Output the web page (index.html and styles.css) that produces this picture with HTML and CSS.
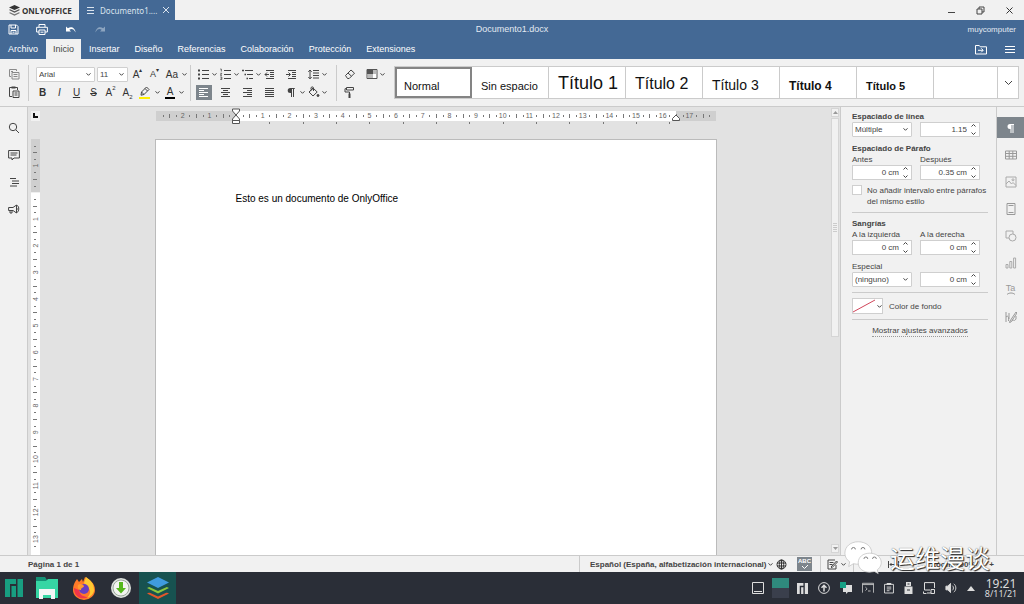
FILE: index.html
```
<!DOCTYPE html>
<html lang="es">
<head>
    <meta charset="UTF-8">
    <meta name="viewport" content="width=device-width, initial-scale=1.0">
    <title>Documento1.docx</title>
    <link rel="stylesheet" href="styles.css">
</head>
<body>

<div class="titlebar">
    <div class="brand">
        <svg width="11" height="11" viewBox="0 0 11 11"><path fill="#333" d="M5.500 0 11 2.500 5.500 5 0 2.500z"/><path fill="#555" d="M1 4.300 5.500 6.300 10 4.300 11 5 5.500 7.700 0 5z"/><path fill="#777" d="M1 7.200 5.500 9.200 10 7.200 11 7.900 5.500 10.700 0 7.900z"/></svg>
        <span>ONLYOFFICE</span>
    </div>
    <div class="doc-tab">
        <svg width="7" height="7" viewBox="0 0 7 7" stroke="#dbe4ee"><path d="M0 .5h7M0 3.500h7M0 6.500h7"/></svg>
        <span class="doc-name">Documento1....</span>
        <button class="icon-btn" aria-label="Cerrar pestaña"><svg width="6" height="6" viewBox="0 0 6 6" stroke="#dbe4ee"><path d="m0 0 6 6M6 0 0 6"/></svg></button>
    </div>
    <div class="window-buttons">
        <button class="icon-btn" aria-label="Minimizar"><svg width="9" height="9" viewBox="0 0 9 9" stroke="#444"><path d="M1 6.500h7"/></svg></button>
        <button class="icon-btn" aria-label="Restaurar"><svg width="9" height="9" viewBox="0 0 9 9" fill="none" stroke="#444"><path d="M1 3h5v5H1zM3 3V1h5v5H6"/></svg></button>
        <button class="icon-btn" aria-label="Cerrar"><svg width="9" height="9" viewBox="0 0 9 9" stroke="#333"><path d="m1.500 1.500 6 6M7.500 1.500l-6 6"/></svg></button>
    </div>
</div>

<header>
    <div class="quick-row">
        <div class="quick-buttons">
            <button class="icon-btn" aria-label="Guardar"><svg width="11" height="11" viewBox="0 0 11 11" fill="none" stroke="#fff"><path d="M1 1h7.500L10 2.500V10H1zM3 1v3h4.500V1M3 10V6.500h5V10M4.500 8.200h2"/></svg></button>
            <button class="icon-btn" aria-label="Imprimir"><svg width="12" height="11" viewBox="0 0 12 11" fill="none" stroke="#fff"><path d="M3 3V.5h6V3M3 8H.6V3.300h10.800V8H9M3 6h6v4.500H3zM4.500 8.200h3"/></svg></button>
            <button class="icon-btn" aria-label="Deshacer"><svg width="12" height="10" viewBox="0 0 12 10"><path fill="#fff" d="M1 1.500v5h5L4.300 4.800C6.500 3.300 9 4 10.500 7.500 10.300 2.800 6 .8 2.900 3.300z"/></svg></button>
            <button class="icon-btn" aria-label="Rehacer"><svg width="12" height="10" viewBox="0 0 12 10"><path fill="#8da5c0" d="M11 1.500v5H6l1.700-1.700C5.500 3.300 3 4 1.500 7.500 1.700 2.800 6 .8 9.100 3.300z"/></svg></button>
        </div>
        <h1>Documento1.docx</h1>
        <span class="user">muycomputer</span>
    </div>
    <nav>
        <a href="#">Archivo</a>
        <a href="#" class="active">Inicio</a>
        <a href="#">Insertar</a>
        <a href="#">Diseño</a>
        <a href="#">Referencias</a>
        <a href="#">Colaboración</a>
        <a href="#">Protección</a>
        <a href="#">Extensiones</a>
        <div class="nav-right">
            <button class="icon-btn" aria-label="Abrir ubicación"><svg width="12" height="11" viewBox="0 0 12 11" fill="none" stroke="#fff"><path d="M.5 10V1.500h3.800l1 1.300h6.200V10zM3 6.300h5M6.200 4.300l2 2-2 2"/></svg></button>
            <button class="icon-btn" aria-label="Opciones"><svg width="10" height="9" viewBox="0 0 10 9" stroke="#fff"><path d="M0 1.500h10M0 4.500h10M0 7.500h10"/></svg></button>
        </div>
    </nav>
</header>

<div class="toolbar">
    <div class="group clipboard">
        <div class="row"><button class="tool" aria-label="Copiar"><svg width="12" height="12" viewBox="0 0 12 12" fill="none" stroke="#8a8a8a"><path d="M3 8.500H1.500v-7h7V3M3 3.500h2M4 4.500h7v6.500H4zM5.500 6.500h4M5.500 8.500h4"/></svg></button></div>
        <div class="row"><button class="tool" aria-label="Pegar"><svg width="12" height="12" viewBox="0 0 12 12" fill="none" stroke="#444"><path d="M4 10.500H1.500v-9h8V4"/><path stroke-width="2" d="M3.500 1.500h4"/><path d="M5 5h6v6.500H5zM6.500 7h3M6.500 9h3"/></svg></button></div>
    </div>
    <div class="group font">
        <div class="row">
            <select class="font-name" aria-label="Fuente"><option>Arial</option></select>
            <select class="font-size" aria-label="Tamaño de letra"><option>11</option></select>
            <button class="tool">A<sup>▴</sup></button>
            <button class="tool small">A<sup>▾</sup></button>
            <button class="tool split">Aa<i class="caret"></i></button>
        </div>
        <div class="row">
            <button class="tool"><b>B</b></button>
            <button class="tool italic">I</button>
            <button class="tool underline">U</button>
            <button class="tool strike">S</button>
            <button class="tool">A<sup>2</sup></button>
            <button class="tool">A<sub>2</sub></button>
            <button class="tool split" aria-label="Color de resaltado"><svg width="12" height="13" viewBox="0 0 12 13" fill="none" stroke="#444"><path stroke="#ffee00" stroke-width="2" d="M0 12h11"/><path d="M2.500 6 7.500 1l2.500 2.500-5 5-3 .7zM2.500 6 5 8.500M6 2.500 8.500 5"/></svg><i class="caret"></i></button>
            <button class="tool split"><span class="font-color">A</span><i class="caret"></i></button>
        </div>
    </div>
    <div class="group para">
        <div class="row">
            <button class="tool" aria-label="Viñetas"><svg width="12" height="12" viewBox="0 0 12 12" stroke="#444"><path d="M4 2.500h7M4 6.500h7M4 10.500h7"/><path stroke-width="2" d="M0 2.500h2M0 6.500h2M0 10.500h2"/></svg><i class="caret"></i></button>
            <button class="tool" aria-label="Numeración"><svg width="12" height="12" viewBox="0 0 12 12" fill="none" stroke="#444"><path d="M4 2.500h7M4 6.500h7M4 10.500h7"/><path stroke-width=".8" d="M.3 1h1v2.500M.3 5.300h1.500l-1.500 2h1.700M.3 9h1.500v2.500H.3M.6 10.200h1"/></svg><i class="caret"></i></button>
            <button class="tool" aria-label="Lista multinivel"><svg width="12" height="12" viewBox="0 0 12 12" stroke="#444"><path d="M3 2.500h8M5 6.500h6M7 10.500h4"/><path stroke-width="1.500" d="M0 2.500h2M2.500 6.500H4M4.500 10.500H6"/></svg><i class="caret"></i></button>
            <button class="tool" aria-label="Reducir sangría"><svg width="12" height="12" viewBox="0 0 12 12" fill="none" stroke="#444"><path d="M2 2.500h8M6 4.500h4M6 6.500h4M6 8.500h4M2 10.500h8M5 6.500H1M3 4.500l-2 2 2 2"/></svg></button>
            <button class="tool" aria-label="Aumentar sangría"><svg width="12" height="12" viewBox="0 0 12 12" fill="none" stroke="#444"><path d="M2 2.500h8M6 4.500h4M6 6.500h4M6 8.500h4M2 10.500h8M0 6.500h4M2.500 4.500l2 2-2 2"/></svg></button>
            <button class="tool" aria-label="Interlineado"><svg width="12" height="12" viewBox="0 0 12 12" fill="none" stroke="#444"><path d="M5 2.500h6M5 5h6M5 7.500h6M5 10h6M2 2v9M.3 3.800 2 2l1.700 1.800M.3 9 2 10.800 3.700 9"/></svg><i class="caret"></i></button>
        </div>
        <div class="row">
            <button class="tool on" aria-label="Alinear a la izquierda"><svg width="12" height="12" viewBox="0 0 12 12" stroke="#fff"><path d="M1 2.500h9M1 4.500h5M1 6.500h9M1 8.500h5M1 10.500h9"/></svg></button>
            <button class="tool" aria-label="Centrar"><svg width="12" height="12" viewBox="0 0 12 12" stroke="#444"><path d="M1 2.500h9M3 4.500h5M1 6.500h9M3 8.500h5M1 10.500h9"/></svg></button>
            <button class="tool" aria-label="Alinear a la derecha"><svg width="12" height="12" viewBox="0 0 12 12" stroke="#444"><path d="M1 2.500h9M5 4.500h5M1 6.500h9M5 8.500h5M1 10.500h9"/></svg></button>
            <button class="tool" aria-label="Justificar"><svg width="12" height="12" viewBox="0 0 12 12" stroke="#444"><path d="M1 2.500h9M1 4.500h9M1 6.500h9M1 8.500h9M1 10.500h9"/></svg></button>
            <button class="tool" aria-label="Caracteres no imprimibles"><svg width="12" height="12" viewBox="0 0 12 12"><path fill="#444" d="M8.500 2H4.200a2.500 2.500 0 0 0 0 5H5v4h1V3h1v8h1V3h1z"/></svg><i class="caret"></i></button>
            <button class="tool" aria-label="Color de sombreado"><svg width="12" height="12" viewBox="0 0 12 12" fill="none" stroke="#444"><path d="M5 2 1 6l4 4 4.200-4zM2 5.500 5 2.500M3 3.500V2c0-1.500 2.500-1.500 2.500 0v3"/><circle cx="10" cy="9.500" r="1" fill="#444"/></svg><i class="caret"></i></button>
        </div>
    </div>
    <div class="group misc">
        <div class="row">
            <button class="tool" aria-label="Borrar estilo"><svg width="12" height="12" viewBox="0 0 12 12" fill="none" stroke="#444"><path d="M1.500 7.500 7 2l3.500 3.200-5.300 5.300H3.500zM4 5l3.500 3.200"/></svg></button>
            <button class="tool" aria-label="Combinación de colores"><svg width="12" height="12" viewBox="0 0 12 12"><path fill="#fff" stroke="#555" d="M1 1.500h10v9H1z"/><path fill="#555" d="M1 1h6v5H1z"/><path fill="#bbb" d="M7 2h3v4H7zM2 6h5v4H2z"/></svg><i class="caret"></i></button>
        </div>
        <div class="row"><button class="tool" aria-label="Copiar estilo"><svg width="12" height="12" viewBox="0 0 12 12" fill="none" stroke="#444"><path d="M2.500 1.500h7v2.500h-7zM2.500 2.700H1V6h4.500v2"/><path stroke-width="2" d="M5.500 7.500V12"/></svg></button></div>
    </div>
    <div class="styles">
        <button class="style selected">Normal</button>
        <button class="style">Sin espacio</button>
        <button class="style t1">Título 1</button>
        <button class="style t2">Título 2</button>
        <button class="style t3">Título 3</button>
        <button class="style t4">Título 4</button>
        <button class="style t5">Título 5</button>
        <div class="style-empty"></div>
        <button class="style-more" aria-label="Más estilos"><svg width="9" height="6" viewBox="0 0 9 6" fill="none" stroke="#444"><path d="m1 1 3.500 3.500L8 1"/></svg></button>
    </div>
</div>

<main>
    <div class="left-bar">
        <button class="side" aria-label="Buscar"><svg width="12" height="12" viewBox="0 0 12 12" fill="none" stroke="#444"><circle cx="5" cy="5" r="3.700"/><path d="m8 8 3 3"/></svg></button>
        <button class="side" aria-label="Comentarios"><svg width="12" height="12" viewBox="0 0 12 12" fill="none" stroke="#444"><path d="M.6 1.500h10.800V9H6l-2 2V9H.6zM2.500 4h7M2.500 6h6"/></svg></button>
        <button class="side" aria-label="Navegación"><svg width="12" height="12" viewBox="0 0 12 12" stroke="#444"><path d="M2 2.500h6M4 5h7M4 7.500h7M2 10h7"/></svg></button>
        <button class="side" aria-label="Sugerencias"><svg width="12" height="12" viewBox="0 0 12 12" fill="none" stroke="#444"><path d="M.6 4.500H5L8.500 2v8L5 7.500H.6zM2 7.500V10h2V7.500M8.500 2.500c3-.5 3 7 0 7M8 4.500c1.500 0 1.500 3 0 3"/></svg></button>
    </div>

    <div class="editor">
        <div class="corner"><svg width="9" height="10" viewBox="0 0 9 10"><path stroke="#111" stroke-width="2" fill="none" d="M3 2v4h4"/></svg></div>
        <div class="ruler-row"><svg id="ruler-h" width="560" height="16"></svg></div>
        <svg id="ruler-v" width="9"></svg>
        <div class="canvas">
            <div class="page"><p>Esto es un documento de OnlyOffice</p></div>
        </div>
        <div class="scrollbar">
            <button class="scroll-btn" aria-label="Subir"><svg width="5" height="3" viewBox="0 0 5 3"><path fill="#999" d="M0 3 2.500 0 5 3z"/></svg></button>
            <div class="thumb"><svg width="4" height="9" viewBox="0 0 4 9" stroke="#ccc"><path d="M0 .5h4M0 2.500h4M0 4.500h4M0 6.500h4M0 8.500h4"/></svg></div>
            <button class="scroll-btn" aria-label="Bajar"><svg width="5" height="3" viewBox="0 0 5 3"><path fill="#999" d="m0 0 2.500 3L5 0z"/></svg></button>
        </div>
    </div>

    <form class="panel">
        <h2>Espaciado de línea</h2>
        <div class="fields">
            <select aria-label="Espaciado de línea"><option>Múltiple</option></select>
            <div class="spin"><input type="text" value="1.15" aria-label="Valor de espaciado"></div>
        </div>
        <h2 class="gap">Espaciado de Párafo</h2>
        <div class="fields">
            <label for="before">Antes</label>
            <label for="after">Después</label>
            <div class="spin"><input type="text" id="before" value="0 cm"></div>
            <div class="spin"><input type="text" id="after" value="0.35 cm"></div>
        </div>
        <div class="check">
            <input type="checkbox" id="same-style">
            <label for="same-style">No añadir intervalo entre párrafos del mismo estilo</label>
        </div>
        <hr>
        <h2>Sangrías</h2>
        <div class="fields">
            <label for="left">A la izquierda</label>
            <label for="right">A la derecha</label>
            <div class="spin"><input type="text" id="left" value="0 cm"></div>
            <div class="spin"><input type="text" id="right" value="0 cm"></div>
        </div>
        <label class="gap" for="special">Especial</label>
        <div class="fields">
            <select id="special"><option>(ninguno)</option></select>
            <div class="spin"><input type="text" value="0 cm" aria-label="Valor especial"></div>
        </div>
        <hr>
        <div class="color-row">
            <button type="button" class="swatch" id="bg-color"><svg width="22" height="14" viewBox="0 0 22 14"><path stroke="#d0455a" d="M0 13 22 1"/></svg><i class="caret"></i></button>
            <label for="bg-color">Color de fondo</label>
        </div>
        <hr>
        <a class="advanced" href="#">Mostrar ajustes avanzados</a>
    </form>

    <div class="right-bar">
        <button class="side on" aria-label="Párrafo"><svg width="12" height="12" viewBox="0 0 12 12"><path fill="#fff" d="M9 2H5a2.500 2.500 0 0 0 0 5h.5v4h1V3h1v8h1V3H9z"/></svg></button>
        <button class="side" aria-label="Tabla"><svg width="12" height="12" viewBox="0 0 12 12" fill="none" stroke="#999"><path d="M.5 2h11v8H.5zM.5 4.500h11M.5 7.300h11M4.200 2v8M7.800 2v8"/></svg></button>
        <button class="side" aria-label="Imagen"><svg width="12" height="12" viewBox="0 0 12 12" fill="none" stroke="#aaa"><path d="M1 1h10v10H1zM1 8l3-3 2.500 3L8 6.500l3 3"/><circle cx="8" cy="3.800" r="1"/></svg></button>
        <button class="side" aria-label="Encabezado"><svg width="12" height="12" viewBox="0 0 12 12" fill="none" stroke="#999"><path d="M2 .5h8v11H2zM3.500 2.500h5M3.500 9.500h5"/></svg></button>
        <button class="side" aria-label="Forma"><svg width="12" height="12" viewBox="0 0 12 12" fill="none" stroke="#aaa"><path d="M4 8H1V1h7v3"/><circle cx="7.500" cy="7.500" r="3.500"/></svg></button>
        <button class="side" aria-label="Gráfico"><svg width="12" height="12" viewBox="0 0 12 12" fill="none" stroke="#aaa"><path d="M1 7.500h2V11H1zM4.800 4.500h2V11h-2zM8.600 1h2v10h-2z"/></svg></button>
        <button class="side text-art">Ta<svg width="10" height="3" viewBox="0 0 10 3" fill="none" stroke="#999"><path d="M1 2.500c2-2 6-2 8 0"/></svg></button>
        <button class="side" aria-label="Firma"><svg width="12" height="12" viewBox="0 0 12 12" fill="none" stroke="#999"><path d="M1 1v10M1 6c2-2 3 0 2.500 4M5 10 11 1l1 1-6 9-1.500.500zM4 2v6M7 10c2-2 2 1 4-2V5"/></svg></button>
    </div>
</main>

<div class="statusbar">
    <span>Página 1 de 1</span>
    <div class="status-right">
        <button class="lang">Español (España, alfabetización internacional)<i class="caret"></i></button>
        <button class="icon-btn" aria-label="Idioma"><svg width="11" height="11" viewBox="0 0 11 11" fill="none" stroke="#333"><circle cx="5.500" cy="5.500" r="4.500"/><ellipse cx="5.500" cy="5.500" rx="2.200" ry="4.500"/><path d="M1 4h9M1 7h9M5.500 1v9"/></svg></button>
        <button class="spell" aria-label="Corrección ortográfica"><span>ABC</span><svg width="8" height="5" viewBox="0 0 8 5" fill="none" stroke="#fff"><path d="m1 1 2.500 2.500L7 0"/></svg></button>
        <button class="status-split" aria-label="Control de cambios"><svg width="11" height="11" viewBox="0 0 11 11" fill="none" stroke="#444"><path d="M9 6v4H1V1h7M2.500 3.500h4M2.500 5.500h3M4 8l5.500-6 1 1L5 8.700z"/></svg><i class="caret"></i></button>
        <div class="zoom">
            <button class="icon-btn" aria-label="Ajustar a página"><svg width="10" height="11" viewBox="0 0 10 11" fill="none" stroke="#777"><path d="M1 1h8v9H1zM3 3l4 5M7 3 3 8"/></svg></button>
            <button class="icon-btn" aria-label="Ajustar a ancho"><svg width="11" height="9" viewBox="0 0 11 9" fill="none" stroke="#444"><path d="M.5 1v7M10.500 1v7M2 4.500h7M3.500 3 2 4.500 3.500 6M7.500 3 9 4.500 7.500 6"/></svg></button>
            <button class="icon-btn">−</button>
            <span>Zoom 100%</span>
            <button class="icon-btn">+</button>
        </div>
    </div>
</div>

<footer>
    <button class="task" aria-label="Menú"><svg width="18" height="18" viewBox="0 0 18 18" fill="#189e81"><path d="M0 0h11v5H5v13H0zM6.500 7H11v11H6.500zM12.500 0H18v18h-5.500z"/></svg></button>
    <button class="task" aria-label="Archivos"><svg width="24" height="24" viewBox="0 0 24 24"><path fill="#159276" d="M1 1h9l2 3v5H1z"/><path fill="#36d6a4" d="M1 5h10l2-2h10v19H1z"/><path fill="#f4f6f6" d="M4 13h16v10h-4v-4H8v4H4z"/></svg></button>
    <button class="task" aria-label="Firefox"><svg width="24" height="24" viewBox="0 0 24 24"><path fill="#ff7a28" d="M3 6 5 3l2 3 3-3 1 3 2-5c4 2 10 6 10 13a11 10 0 0 1-22 0c0-4 1-6 2-8z"/><path fill="#ffca32" d="M14 1c4 3 8 6 8 13 0 4-4 7-7 8 4-4 4-8 1-10l-4-5z"/><path fill="#f0354b" d="M2 12c0 10 9 12 14 9-5 0-8-2-9-7z"/><circle cx="12" cy="13" r="5" fill="#6a3fc0"/><path fill="#ff9a30" d="M6 9c2-2 5-1 6 1 0 2-3 1-3 4-2 0-4-2-3-5z"/></svg></button>
    <button class="task" aria-label="Descargas"><svg width="22" height="22" viewBox="0 0 22 22"><circle cx="11" cy="11" r="10" fill="#dfe3df"/><circle cx="11" cy="11" r="8" fill="#f2f4f0" stroke="#9aa89a"/><path fill="#55b81c" d="M9 5h4v6h3l-5 5.500L6 11h3z"/></svg></button>
    <button class="task active" aria-label="OnlyOffice"><svg width="24" height="24" viewBox="0 0 24 24"><path fill="#e2572b" d="m12 12.500 11 5L12 23 1 17.500z"/><path fill="#175250" d="m12 9.500 11 5.300v.7l-11 5-11-5v-.7z"/><path fill="#8cc63e" d="m12 7 11 5-11 5.500L1 12z"/><path fill="#175250" d="m12 4 11 5.300v.7l-11 5-11-5v-.7z"/><path fill="#3f9bdf" d="m12 1 11 5.500L12 12 1 6.500z"/></svg></button>

    <div class="tray">
        <svg width="12" height="12" viewBox="0 0 12 12" fill="none" stroke="#ddd"><path d="M.5.5h11v11H.5zM2 9.500h8"/></svg>
        <div class="pager"></div>
        <svg width="11" height="11" viewBox="0 0 12 12" fill="#ddd"><path d="M0 0h7v3H3v9H0zM4.500 4.500H7V12H4.500zM8.500 0H12v12H8.500z"/></svg>
        <svg width="12" height="12" viewBox="0 0 12 12" fill="none" stroke="#ddd"><circle cx="6" cy="6" r="5.400"/><path stroke-width="1.500" d="M6 9.500V3.500M3.500 5.800 6 3.300l2.500 2.500"/></svg>
        <svg width="12" height="12" viewBox="0 0 12 12"><path fill="#ddd" d="M3 3h9v7H8l-2 2v-2H3z"/><path fill="#16a085" d="M0 0h6v6H0z"/></svg>
        <svg width="12" height="12" viewBox="0 0 14 12" fill="none" stroke="#ccc"><path d="M.5 11.500V.5h13v11M.5 2h13M4 5l2 2-2 2M7 9.500h3"/></svg>
        <svg width="10" height="12" viewBox="0 0 11 12" fill="none" stroke="#ddd"><path d="M.6 2h9.800v9.500H.6zM3 5h5M3 7h5M3 9h3"/><path stroke-width="2" d="M3 1.500h5"/></svg>
        <svg width="9" height="12" viewBox="0 0 9 12" fill="#ddd"><path d="M2 0h5v4H2z"/><path d="M.5 4.500h8V12h-8z"/><path stroke="#2a2e35" d="M3.500 2h2M3 8h3"/></svg>
        <svg width="12" height="12" viewBox="0 0 12 12" fill="none" stroke="#ddd"><path d="M11.500 6V.6H1.500V8H7M4 11h4M.5 9.500v2h3M8 7.500h3.500v4H8z"/></svg>
        <svg width="12" height="12" viewBox="0 0 13 12" fill="none" stroke="#ddd"><path fill="#ddd" d="M1 4h2l3-3v10L3 8H1z"/><path d="M8 3.500c1.500 1 1.500 4 0 5M9.500 1.500c3 2 3 7 0 9"/></svg>
        <svg width="8" height="5" viewBox="0 0 8 5"><path fill="#ddd" d="M0 5 4 0l4 5z"/></svg>
    </div>
    <div class="clock"><span class="time">19:21</span><span class="date">8/11/21</span></div>
</footer>

<div class="watermark">
    <svg width="40" height="36" viewBox="0 0 42 36"><g fill="#fff" stroke="#bbb" stroke-width=".7"><path d="M16 2C8 2 2 7 2 14c0 4 2 7 5 9l-1 5 5-3c8 2 18-1 19-10C31 7 24 2 16 2z"/><path d="M28 14c-7 0-12 4-12 10s5 10 12 10l5-.8 4 2.300-1-4c8-6 4-17.500-8-17.500z"/></g><g fill="none" stroke="#777"><path d="M9 10a2 2 0 0 1 4 0M19 10a2 2 0 0 1 4 0M22 20a2 2 0 0 1 4 0M31 20a2 2 0 0 1 4 0"/></g></svg>
    <span>运维漫谈</span>
</div>

<script src="script.js"></script>
</body>
</html>
```
FILE: styles.css
```
* {
    box-sizing: border-box;
}
body {
    display: flex;
    flex-direction: column;
    height: 100vh;
    margin: 0;
    overflow: hidden;
    background-color: #f1f1f1;
    color: #444;
    font-family: "Liberation Sans", Arial, sans-serif;
    font-size: 8px;
    line-height: 11px;
}
button, input, select {
    margin: 0;
    padding: 0;
    border: 0;
    background: none;
    color: inherit;
    font: inherit;
}
svg {
    display: block;
    flex: none;
}
a {
    color: inherit;
    text-decoration: none;
}
.icon-btn {
    display: flex;
    align-items: center;
    justify-content: center;
}
.caret {
    flex: none;
    width: 5px;
    height: 3px;
    background: url("data:image/svg+xml,%3Csvg xmlns='http://www.w3.org/2000/svg' width='5' height='3'%3E%3Cpath d='M.5.3l2 2 2-2' fill='none' stroke='%23444'/%3E%3C/svg%3E") no-repeat;
}

/* window title */
.titlebar {
    display: flex;
    flex: none;
    height: 20px;
}
.brand, .doc-tab {
    display: flex;
    align-items: center;
}
.brand {
    width: 79px;
    padding-left: 9px;
    gap: 2px;
    color: #333;
    font: bold 8px "Open Sans", sans-serif;
}
.doc-tab {
    width: 96px;
    padding: 0 6px 0 8px;
    gap: 6px;
    background-color: #446995;
    color: #dbe4ee;
    font: 8px "Noto Sans", sans-serif;
}
.doc-name {
    flex: 1;
    white-space: nowrap;
}
.window-buttons {
    display: flex;
    gap: 20px;
    margin-left: auto;
    padding-right: 10px;
}

/* header */
header {
    flex: none;
    background-color: #446995;
    color: #fff;
}
.quick-row {
    display: grid;
    grid-template-columns: 1fr auto 1fr;
    align-items: center;
    height: 19px;
    padding: 0 8px;
}
.quick-buttons {
    display: flex;
    gap: 17px;
}
h1 {
    margin: 0;
    color: #e3eaf2;
    font-size: 9px;
    font-weight: normal;
}
.user {
    justify-self: end;
    color: #e3eaf2;
}
nav {
    display: flex;
    gap: 1px;
    height: 20px;
    padding-left: 1px;
    font-size: 9px;
    line-height: 20px;
}
nav a {
    padding: 0 7px;
}
nav a.active {
    background-color: #f1f1f1;
    color: #444;
}
.nav-right {
    display: flex;
    gap: 18px;
    margin-left: auto;
    padding-right: 9px;
}

/* toolbar */
.toolbar {
    display: flex;
    flex: none;
    height: 48px;
    padding: 6px 5px 5px 5px;
    border-bottom: 1px solid #cbcbcb;
}
.group {
    flex: none;
    height: 36px;
}
.group + .group {
    border-left: 1px solid #cbcbcb;
}
.clipboard {
    width: 23px;
}
.clipboard .tool {
    padding-left: 3px;
}
.font {
    width: 162px;
    padding-left: 5px;
}
.para {
    width: 146px;
    padding-left: 2px;
}
.misc {
    width: 58px;
    padding-left: 2px;
}
.row {
    display: flex;
    align-items: center;
    height: 18px;
}
.tool {
    display: flex;
    flex: none;
    align-items: center;
    height: 15px;
    color: #333;
}
.font .tool {
    justify-content: center;
    width: 17px;
    font-size: 10px;
}
.font .split {
    justify-content: flex-end;
    width: 24px;
    gap: 4px;
}
.font .small {
    font-size: 9px;
}
.tool sup, .tool sub {
    font-size: 6px;
    line-height: 6px;
}
.tool sup {
    align-self: flex-start;
}
.tool sub {
    align-self: flex-end;
}
.italic {
    font-style: italic;
}
.underline {
    text-decoration: underline;
}
.strike {
    text-decoration: line-through;
}
.font-color {
    width: 10px;
    border-bottom: 2px solid #000;
    text-align: center;
}
.para .tool, .misc .tool {
    width: 22px;
    padding-left: 5px;
    gap: 2px;
}
.para .tool.on {
    width: 16px;
    margin: 0 3px;
    padding-left: 2px;
    background-color: #7d858c;
}
select {
    height: 15px;
    padding: 0 2px;
    border: 1px solid #cfcfcf;
    border-radius: 1px;
    background: #fff url("data:image/svg+xml,%3Csvg xmlns='http://www.w3.org/2000/svg' width='5' height='3'%3E%3Cpath d='M.5.3l2 2 2-2' fill='none' stroke='%23444'/%3E%3C/svg%3E") no-repeat right 3px center;
    appearance: none;
}
.font-name {
    width: 59px;
    margin: 0 2px;
}
.font-size {
    width: 31px;
}
.row .font-size + .tool {
    margin-left: 1px;
}
.styles {
    display: flex;
    flex: 1;
    height: 33px;
    margin-top: 1px;
    border: 1px solid #cbcbcb;
    background-color: #fff;
}
.style {
    flex: none;
    width: 77px;
    padding: 4px 6px 0 9px;
    border-right: 1px solid #cbcbcb;
    color: #111;
    font-size: 11px;
    line-height: 30px;
    text-align: left;
    white-space: nowrap;
}
.style.selected {
    padding: 2px 6px 0 7px;
    border: 2px solid #848484;
}
.style.t1 {
    padding-top: 0;
    font-size: 18px;
}
.style.t2 {
    padding-top: 2px;
    font-size: 16px;
}
.style.t3 {
    padding-top: 3px;
    font-size: 14px;
}
.style.t4 {
    font-size: 12px;
    font-weight: bold;
}
.style.t5 {
    font-weight: bold;
}
.style-empty {
    flex: 1;
}
.style-more {
    display: flex;
    align-items: center;
    justify-content: center;
    width: 21px;
    border-left: 1px solid #cbcbcb;
}

/* side bars */
main {
    display: flex;
    flex: 1;
    min-height: 0;
}
.left-bar, .right-bar {
    display: flex;
    flex: none;
    flex-direction: column;
    gap: 6px;
    width: 28px;
    padding-top: 10px;
}
.left-bar {
    border-right: 1px solid #cbcbcb;
}
.right-bar {
    border-left: 1px solid #cbcbcb;
}
.side {
    display: flex;
    align-items: center;
    justify-content: center;
    width: 100%;
    height: 21px;
}
.side.on {
    background-color: #7d858c;
}
.side.text-art {
    flex-direction: column;
    color: #999;
    font-size: 9px;
    line-height: 8px;
}

/* document area */
.editor {
    display: grid;
    flex: 1;
    grid-template-columns: 9px 1fr 8px;
    grid-template-rows: 28px 1fr;
    min-width: 0;
    padding: 4px 1px 0 3px;
    background-color: #e2e2e2;
}
.corner {
    height: 10px;
    background-color: #f1f1f1;
}
.ruler-row {
    display: flex;
    justify-content: center;
}
#ruler-h {
    overflow: visible;
}
#ruler-v {
    height: 100%;
    grid-row: 2;
}
#ruler-h text, #ruler-v text {
    fill: #666;
    font-size: 7px;
    text-anchor: middle;
}
.canvas {
    display: flex;
    grid-row: 2;
    justify-content: center;
    min-height: 0;
}
.page {
    width: 562px;
    padding: 52px 80px 0;
    border: 1px solid #bbb;
    border-bottom: 0;
    background-color: #fff;
}
.page p {
    margin: 0;
    color: #000;
    font-size: 10px;
    line-height: 13px;
}
.scrollbar {
    display: flex;
    grid-column: 3;
    grid-row: 1 / 3;
    flex-direction: column;
    margin-top: -3px;
}
.scroll-btn {
    display: flex;
    align-items: center;
    justify-content: center;
    height: 9px;
    border: 1px solid #d5d5d5;
    background-color: #f1f1f1;
}
.scroll-btn:last-child {
    margin: auto 0 2px;
}
.thumb {
    display: flex;
    align-items: center;
    justify-content: center;
    height: 49%;
    margin-top: 1px;
    border: 1px solid #d5d5d5;
    background-color: #f1f1f1;
}

/* paragraph settings */
.panel {
    flex: none;
    width: 156px;
    padding: 4px 8px 0 11px;
    border-left: 1px solid #cbcbcb;
}
h2 {
    margin: 0;
    font-size: 8px;
}
.panel .gap {
    display: block;
    margin-top: 6px;
}
.fields {
    display: grid;
    grid-template-columns: 60px 60px;
    column-gap: 8px;
}
.spin {
    height: 15px;
    border: 1px solid #cfcfcf;
    background: #fff url("data:image/svg+xml,%3Csvg xmlns='http://www.w3.org/2000/svg' width='5' height='11'%3E%3Cpath d='M.5 2.500l2-2 2 2M.5 8.500l2 2 2-2' fill='none' stroke='%23444'/%3E%3C/svg%3E") no-repeat right 3px center;
}
.spin input {
    display: block;
    width: 46px;
    height: 13px;
    text-align: right;
}
.check {
    display: flex;
    gap: 5px;
    margin-top: 5px;
}
.check label {
    flex: 1;
}
.check input {
    width: 10px;
    height: 10px;
    border: 1px solid #cfcfcf;
    background-color: #fff;
    appearance: none;
}
hr {
    margin: 5px 0;
    border: 0;
    border-top: 1px solid #cbcbcb;
}
.color-row {
    display: flex;
    align-items: center;
    gap: 6px;
}
.swatch {
    display: flex;
    align-items: center;
    gap: 2px;
    width: 31px;
    height: 16px;
    border: 1px solid #cfcfcf;
    background-color: #fff;
}
.advanced {
    display: block;
    width: max-content;
    margin: 0 auto;
    border-bottom: 1px dotted #999;
}

/* status bar */
.statusbar {
    display: flex;
    flex: none;
    align-items: center;
    height: 17px;
    padding-left: 28px;
    border-top: 1px solid #cbcbcb;
    font-weight: bold;
}
.status-right {
    display: flex;
    align-items: center;
    width: 445px;
    height: 100%;
    margin-left: auto;
    padding-left: 10px;
    border-left: 1px solid #cbcbcb;
}
.lang {
    display: flex;
    align-items: center;
    gap: 2px;
    width: 186px;
    white-space: nowrap;
}
.spell {
    width: 15px;
    height: 14px;
    margin: 0 8px 0 10px;
    background-color: #7d858c;
    color: #fff;
    font-size: 6px;
    line-height: 7px;
}
.spell svg {
    margin: 0 auto;
}
.status-split {
    display: flex;
    align-items: center;
    gap: 3px;
    width: 33px;
    height: 100%;
    padding-left: 6px;
    border-left: 1px solid #cbcbcb;
}
.zoom {
    display: flex;
    flex: 1;
    align-items: center;
    justify-content: space-between;
    height: 100%;
    padding: 0 30px 0 10px;
    border-left: 1px solid #cbcbcb;
}

/* desktop panel */
footer {
    display: flex;
    flex: none;
    align-items: center;
    height: 32px;
    padding-right: 6px;
    background-color: #2a2e37;
}
.task {
    display: flex;
    align-items: center;
    justify-content: center;
    width: 37px;
    height: 32px;
}
.task:first-child {
    width: 28px;
}
.task.active {
    background-color: #175250;
}
.tray {
    display: flex;
    flex: none;
    align-items: center;
    gap: 10px;
    margin-left: auto;
}
.pager {
    width: 17px;
    height: 20px;
    margin: 0 -2px;
    border-top: 10px solid #2f8a7d;
    background-color: #3a3f4c;
}
.clock {
    display: flex;
    flex-direction: column;
    align-items: center;
    width: 34px;
    margin-left: 9px;
    color: #ddd;
    font-family: "Noto Sans", sans-serif;
}
.time {
    font-size: 12px;
}
.date {
    font-size: 9px;
    line-height: 9px;
}

.watermark {
    position: absolute;
    right: 34px;
    bottom: 29px;
    display: flex;
    align-items: center;
    gap: 7px;
    color: #fff;
    font-family: "Noto Sans CJK SC", sans-serif;
    font-size: 25px;
    line-height: 36px;
    text-shadow: 1px 1px 1px #222, 0 0 1px #444;
}
```
FILE: script.js
```
const CM = 560 / 21;

function add(svg, tag, attrs, text) {
    const el = document.createElementNS("http://www.w3.org/2000/svg", tag);
    for (const key in attrs) el.setAttribute(key, attrs[key]);
    if (text !== undefined) el.textContent = text;
    svg.appendChild(el);
}

// horizontal ruler: 3 cm left margin, 16.5 cm text, 1.5 cm right margin
const h = document.getElementById("ruler-h");
add(h, "rect", { width: 560, height: 10, fill: "#cfcfcf" });
add(h, "rect", { x: 80, width: 440, height: 10, fill: "#fff" });
for (let q = 1; q < 84; q++) {
    const x = q * CM / 4;
    const n = Math.abs(q / 4 - 3);
    if (q % 4 === 0) {
        if (n) add(h, "text", { x: x, y: 7 }, n);
    } else {
        const len = q % 2 ? 2 : 4;
        add(h, "rect", { x: Math.round(x), y: 5 - len / 2, width: 1, height: len, fill: "#777" });
    }
}
for (let t = 1; t < 14; t++) {
    add(h, "rect", { x: Math.round(80 + t * CM * 1.25), y: 11, width: 1, height: 2, fill: "#777" });
}
add(h, "path", { d: "M76.500-2h7v2l-3.500 4-3.500-4zM76.500 9.500v-1.500l3.500-4 3.500 4v1.500zM76.500 9.500h7v3h-7z", fill: "#fff", stroke: "#555" });
add(h, "path", { d: "M516.500 9.500v-2l3.500-3.500 3.500 3.500v2z", fill: "#fff", stroke: "#555" });

// vertical ruler: 2 cm top margin
const v = document.getElementById("ruler-v");
const count = Math.floor((v.getBoundingClientRect().height - 4) / CM * 4);
add(v, "rect", { width: 9, height: "100%", fill: "#fff" });
add(v, "rect", { width: 9, height: 2 * CM, fill: "#cfcfcf" });
for (let q = 1; q <= count; q++) {
    const y = q * CM / 4;
    const n = Math.abs(q / 4 - 2);
    if (q % 4 === 0) {
        if (n) add(v, "text", { transform: "translate(7 " + y + ") rotate(-90)" }, n);
    } else {
        const len = q % 2 ? 2 : 4;
        add(v, "rect", { x: 4 - len / 2, y: Math.round(y), width: len, height: 1, fill: "#777" });
    }
}
```
